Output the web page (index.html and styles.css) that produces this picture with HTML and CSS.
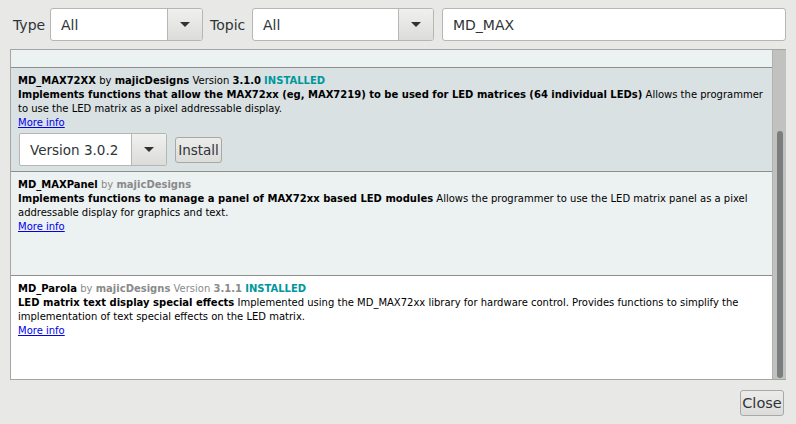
FILE: index.html
```html
<!DOCTYPE html>
<html>
<head>
<meta charset="utf-8">
<link rel="stylesheet" href="styles.css">
</head>
<body>
<div class="window">
  <div class="toolbar">
    <span class="lbl">Type</span>
    <div class="combo combo-type"><span class="combo-text">All</span><span class="combo-btn"><span class="tri"></span></span></div>
    <span class="lbl lbl-topic">Topic</span>
    <div class="combo combo-topic"><span class="combo-text">All</span><span class="combo-btn"><span class="tri"></span></span></div>
    <div class="search">MD_MAX</div>
  </div>
  <div class="list">
    <div class="items">
      <div class="item item-partial"></div>
      <div class="item item-sel">
        <div class="line"><b>MD_MAX72XX</b> by <b>majicDesigns</b> Version <b>3.1.0</b> <b class="inst">INSTALLED</b></div>
        <div class="line"><b>Implements functions that allow the MAX72xx (eg, MAX7219) to be used for LED matrices (64 individual LEDs)</b> Allows the programmer to use the LED matrix as a pixel addressable display.</div>
        <div class="line"><a href="#">More info</a></div>
        <div class="actions">
          <div class="combo combo-ver"><span class="combo-text">Version 3.0.2</span><span class="combo-btn"><span class="tri"></span></span></div>
          <div class="btn btn-install">Install</div>
        </div>
      </div>
      <div class="item item-alt">
        <div class="line"><b>MD_MAXPanel</b> <span class="muted">by <b>majicDesigns</b></span></div>
        <div class="line"><b>Implements functions to manage a panel of MAX72xx based LED modules</b> Allows the programmer to use the LED matrix panel as a pixel addressable display for graphics and text.</div>
        <div class="line"><a href="#">More info</a></div>
      </div>
      <div class="item item-white">
        <div class="line"><b>MD_Parola</b> <span class="muted">by <b>majicDesigns</b> Version <b>3.1.1</b></span> <b class="inst">INSTALLED</b></div>
        <div class="line"><b>LED matrix text display special effects</b> Implemented using the MD_MAX72xx library for hardware control. Provides functions to simplify the implementation of text special effects on the LED matrix.</div>
        <div class="line"><a href="#">More info</a></div>
      </div>
    </div>
    <div class="scrollbar"><div class="thumb"></div></div>
  </div>
  <div class="footer">
    <div class="btn btn-close">Close</div>
  </div>
</div>
</body>
</html>
```
FILE: styles.css
```css
* { box-sizing: border-box; }
html, body { margin: 0; padding: 0; }
body {
  width: 796px;
  height: 424px;
  background: #e8e8e7;
  font-family: "DejaVu Sans", Verdana, sans-serif;
  color: #2e3436;
  overflow: hidden;
}
.window { display: flex; flex-direction: column; height: 424px; }
.toolbar {
  display: flex;
  align-items: center;
  height: 33px;
  margin-top: 8px;
  padding-left: 13px;
  font-size: 14px;
}
.lbl { width: 37px; color: #2e3436; }
.lbl-topic { width: 42px; margin-left: 7px; }
.combo {
  display: flex;
  height: 33px;
  background: #fff;
  border: 1px solid #b6b6b3;
  border-radius: 3px;
  overflow: hidden;
}
.combo-type { width: 153px; }
.combo-topic { width: 182px; }
.combo-text {
  flex: 1;
  display: flex;
  align-items: center;
  padding-left: 10px;
  color: #2e3436;
}
.combo-btn {
  width: 35px;
  display: flex;
  align-items: center;
  justify-content: center;
  border-left: 1px solid #b6b6b3;
  background: linear-gradient(#f0f0ef, #dcdcda);
}
.tri {
  width: 0; height: 0;
  border-left: 5px solid transparent;
  border-right: 5px solid transparent;
  border-top: 5px solid #2e3436;
}
.search {
  width: 344px;
  height: 33px;
  margin-left: 8px;
  background: #fff;
  border: 1px solid #b6b6b3;
  border-radius: 3px;
  display: flex;
  align-items: center;
  padding-left: 10px;
  color: #2e3436;
}
.list {
  display: flex;
  margin: 8px 0 0 10px;
  width: 776px;
  height: 331px;
  border: 1px solid #a5a5a3;
  border-right: none;
  background: #fff;
}
.items { flex: 1; overflow: hidden; }
.item {
  height: 104px;
  padding: 6px 4px 0 7px;
  border-top: 1px solid #8e8f8d;
  font-size: 10px;
  line-height: 14px;
  color: #000;
}
.item-partial { height: 17px; border-top: none; background: #ecf1f1; }
.item-sel { background: #d9e1e3; }
.item-alt { background: #ecf1f1; }
.item-white { background: #fff; }
.line b { font-weight: bold; }
.inst { color: #00979c; }
.muted { color: #8a8a8a; }
a { color: #0000ee; text-decoration: underline; }
.actions { display: flex; align-items: center; margin-top: 3px; }
.combo-ver {
  width: 148px;
  height: 33px;
  margin-left: 1px;
  font-size: 13.5px;
  border-radius: 2px;
}
.btn {
  display: flex;
  align-items: center;
  justify-content: center;
  background: linear-gradient(#ececeb, #dcdcda);
  border: 1px solid #a8a8a6;
  border-radius: 3px;
  color: #2e3436;
}
.btn-install { width: 47px; height: 26px; margin-left: 8px; font-size: 13.5px; }
.scrollbar {
  width: 14px;
  background: #c1c2c0;
  border-left: 1px solid #b0b1af;
  position: relative;
}
.thumb {
  position: absolute;
  left: 4px;
  top: 81px;
  width: 6px;
  height: 247px;
  background: #7b7e7e;
  border-radius: 3px;
}
.footer {
  display: flex;
  justify-content: flex-end;
  padding: 10px 12px 0 0;
}
.btn-close { width: 44px; height: 26px; font-size: 14.5px; }
```
